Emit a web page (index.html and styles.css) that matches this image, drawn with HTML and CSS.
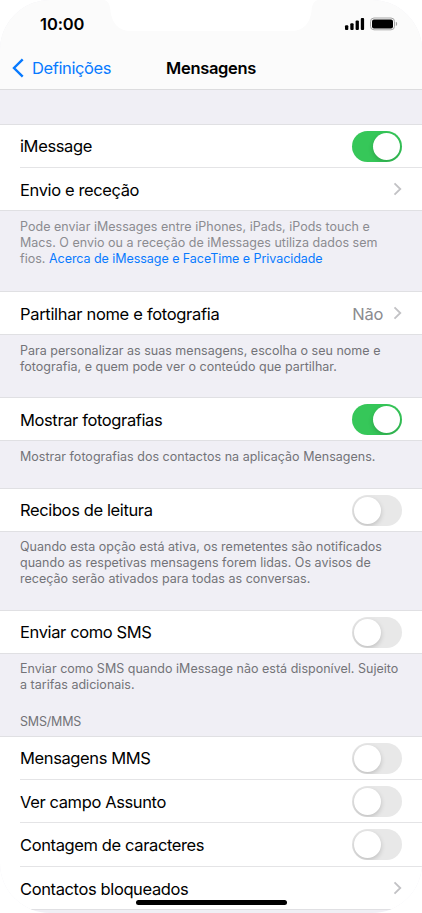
FILE: index.html
```html
<!DOCTYPE html>
<html lang="pt-PT">
<head>
<meta charset="utf-8">
<meta name="viewport" content="width=device-width, initial-scale=1">
<title>Mensagens</title>
<link rel="stylesheet" href="styles.css">
</head>
<body>
<main class="screen">
  <header class="header">
    <svg class="notch" width="214" height="31" viewBox="0 0 214 31"><path d="M0 0C5 1 6 6 6.500 11C8 23 14 31 27 31H187C200 31 206 23 207.500 11C208 6 209 1 214 0Z" fill="#fff"/></svg>
    <div class="status">
      <span class="time">10:00</span>
      <svg class="status-icons" width="54" height="14" viewBox="0 0 54 14">
        <rect x="1" y="8.3" width="3.3" height="4.7" rx="1"/>
        <rect x="6.3" y="6.2" width="3.3" height="6.8" rx="1"/>
        <rect x="11.6" y="3.6" width="3.3" height="9.4" rx="1"/>
        <rect x="16.8" y="1" width="3.3" height="12" rx="1"/>
        <rect x="26.5" y="1" width="24" height="11.8" rx="3.5" fill="none" stroke="#a6a6a6"/>
        <rect x="28" y="2.4" width="21" height="9" rx="2"/>
        <path d="M51.9 4.8q1.3.5 1.3 2.1t-1.3 2.1z" fill="#a6a6a6"/>
      </svg>
    </div>
    <nav class="navbar">
      <a class="back"><svg width="13" height="20" viewBox="0 0 13 20"><path d="M10.7 1.4L2 10l8.7 8.6" fill="none" stroke="#087aff" stroke-width="2.4"/></svg><span>Definições</span></a>
      <h1 class="title">Mensagens</h1>
    </nav>
  </header>

  <section class="group first">
    <div class="row"><span class="label">iMessage</span><span class="switch on"></span></div>
    <div class="row"><span class="label low">Envio e receção</span><svg class="chevron" viewBox="0 0 9 14"><path d="M1.5 1.3L7.3 7l-5.8 5.7"/></svg></div>
  </section>
  <p class="note light n1">Pode enviar iMessages entre iPhones, iPads, iPods touch e<br>Macs. O envio ou a receção de iMessages utiliza dados sem<br>fios. <a class="link">Acerca de iMessage e FaceTime e Privacidade</a></p>

  <section class="group">
    <div class="row"><span class="label wide low">Partilhar nome e fotografia</span><span class="value low">Não</span><svg class="chevron" viewBox="0 0 9 14"><path d="M1.5 1.3L7.3 7l-5.8 5.7"/></svg></div>
  </section>
  <p class="note n2">Para personalizar as suas mensagens, escolha o seu nome e<br>fotografia, e quem pode ver o conteúdo que partilhar.</p>

  <section class="group">
    <div class="row"><span class="label low">Mostrar fotografias</span><span class="switch on"></span></div>
  </section>
  <p class="note n3">Mostrar fotografias dos contactos na aplicação Mensagens.</p>

  <section class="group">
    <div class="row"><span class="label">Recibos de leitura</span><span class="switch"></span></div>
  </section>
  <p class="note n4">Quando esta opção está ativa, os remetentes são notificados<br>quando as respetivas mensagens forem lidas. Os avisos de<br>receção serão ativados para todas as conversas.</p>

  <section class="group">
    <div class="row"><span class="label">Enviar como SMS</span><span class="switch"></span></div>
  </section>
  <div class="note n5"><p>Enviar como SMS quando iMessage não está disponível. Sujeito<br>a tarifas adicionais.</p><h2 class="section-title">SMS/MMS</h2></div>

  <section class="group last">
    <div class="row"><span class="label">Mensagens MMS</span><span class="switch"></span></div>
    <div class="row"><span class="label low">Ver campo Assunto</span><span class="switch"></span></div>
    <div class="row tall"><span class="label">Contagem de caracteres</span><span class="switch"></span></div>
    <div class="row"><span class="label low">Contactos bloqueados</span><svg class="chevron" viewBox="0 0 9 14"><path d="M1.5 1.3L7.3 7l-5.8 5.7"/></svg></div>
  </section>
  <div class="home-indicator"></div>
</main>
</body>
</html>
```
FILE: styles.css
```css
* { box-sizing: border-box; margin: 0; padding: 0; }
body { background: #fff; font-family: Inter, "Liberation Sans", sans-serif; color: #000; }
.screen { position: relative; width: 422px; height: 913px; overflow: hidden; border-radius: 50px; background: #f0eff5; }

.header { position: relative; height: 90px; background: #fbfbfb; border-bottom: 1px solid #dcdcde; }
.notch { position: absolute; top: 0; left: 104px; }
.status { display: flex; justify-content: space-between; align-items: center; height: 46px; padding: 2px 24px 0 40px; }
.time { font-size: 16.5px; font-weight: 600; letter-spacing: -0.1px; }
.status-icons { display: block; }
.navbar { display: grid; grid-template-columns: 1fr auto 1fr; align-items: center; height: 43px; padding: 0 12px; }
.back { display: flex; align-items: center; gap: 7px; color: #087aff; font-size: 16.5px; letter-spacing: -0.4px; }
.title { font-size: 16.5px; font-weight: 600; letter-spacing: -0.33px; }

.group { border-top: 1px solid #e0e0e3; border-bottom: 1px solid #e0e0e3; background: #fff; }
.group.first { margin-top: 34px; }
.row { display: flex; align-items: center; height: 42px; margin-left: 20px; padding-right: 20px; }
.row + .row { height: 43px; border-top: 1px solid #e4e4e6; }
.row + .row.tall { height: 44px; }
.label { flex: 1; font-size: 16.5px; letter-spacing: -0.38px; white-space: nowrap; }
.wide { letter-spacing: -0.31px; }
.low { padding-top: 1px; }
.value { margin-right: 10px; color: #8b8b8f; font-size: 16.5px; letter-spacing: -0.3px; }
.chevron { width: 9px; height: 14px; fill: none; stroke: #c2c2c5; stroke-width: 1.8; }

.switch { display: flex; align-items: center; width: 50px; height: 31px; padding: 0 2px; border-radius: 16px; background: #e8e8e8; overflow: hidden; }
.switch::before { content: ""; width: 27px; height: 27px; border-radius: 50%; background: #fff; box-shadow: 0 2px 5px rgba(0, 0, 0, .18); }
.switch.on { justify-content: flex-end; background: #36c759; }

.note { padding: 8px 0 0 20px; color: #737378; font-size: 12.5px; line-height: 15.75px; letter-spacing: 0.02px; white-space: nowrap; }
.light { color: #8b8b90; }
.link { color: #087aff; letter-spacing: -0.05px; }
.n1 { height: 80px; }
.n2 { height: 62px; }
.n3 { height: 47px; }
.n4 { height: 78px; padding-top: 7px; }
.n5 { display: flex; flex-direction: column; justify-content: space-between; height: 82px; padding-bottom: 6px; padding-top: 7px; }
.section-title { font-size: 12.5px; font-weight: 400; letter-spacing: -0.2px; }
.home-indicator { position: absolute; left: 136px; top: 900px; width: 151px; height: 5px; border-radius: 3px; background: #000; }
```
